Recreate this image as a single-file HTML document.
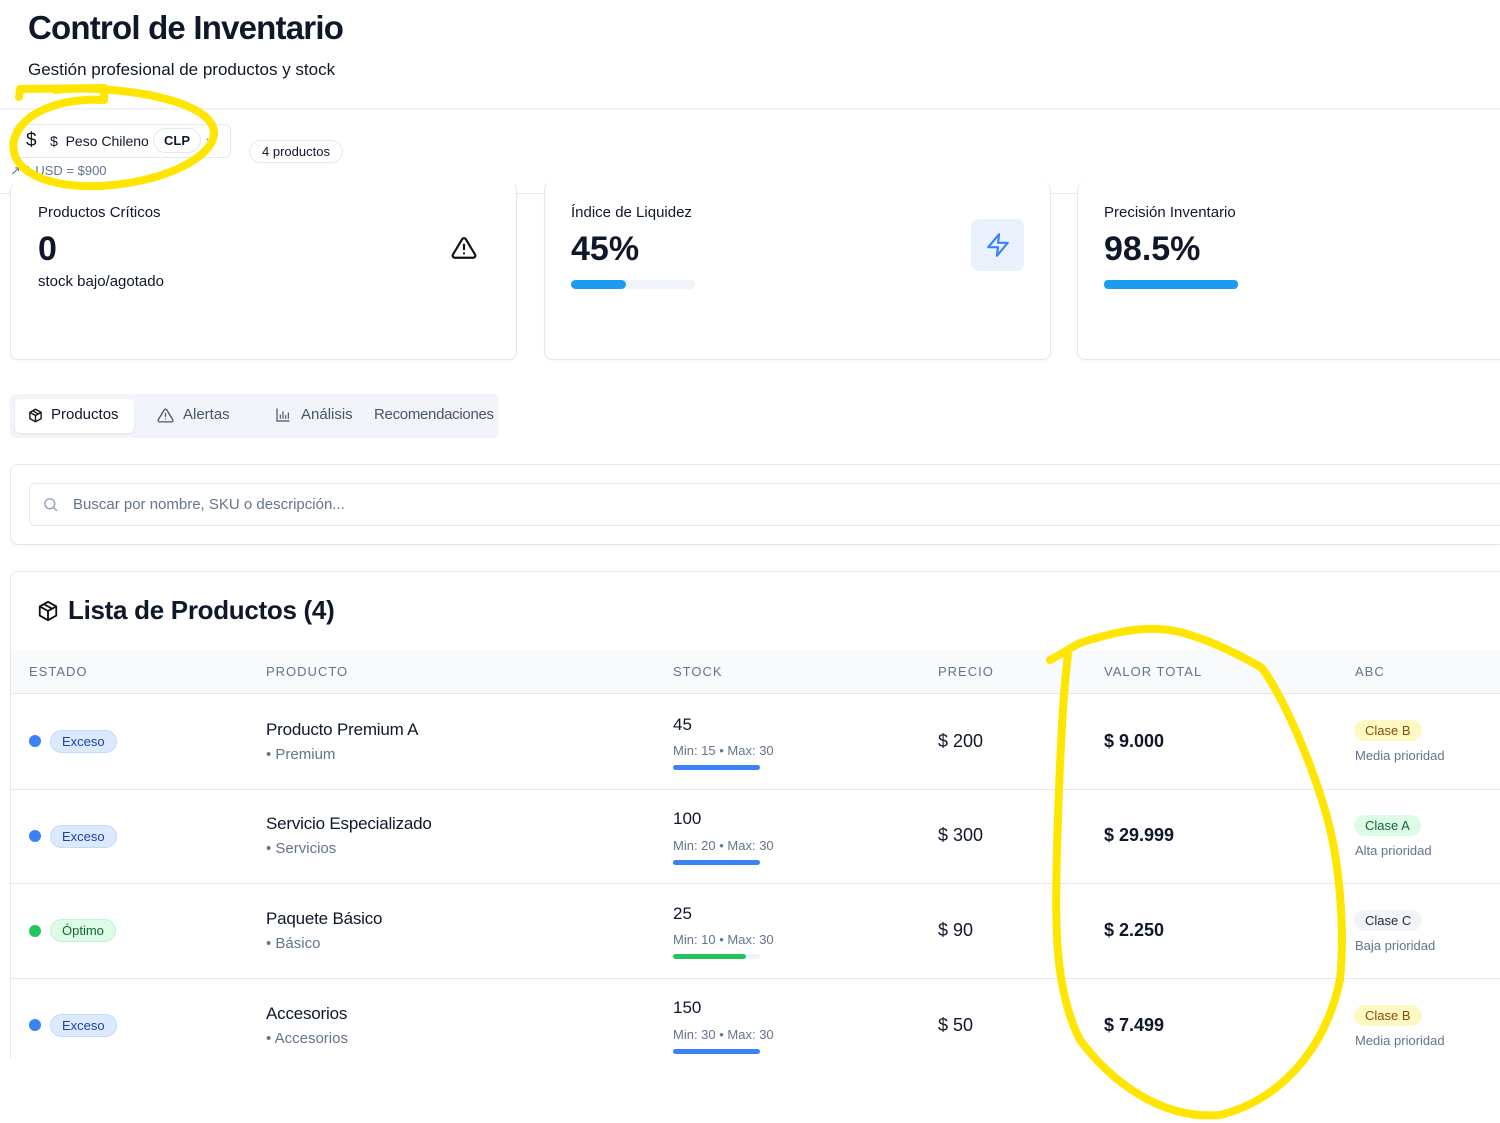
<!DOCTYPE html>
<html><head><meta charset="utf-8"><style>
*{box-sizing:border-box;margin:0;padding:0}
html,body{width:1500px;height:1123px;overflow:hidden}
body{background:#fff;font-family:"Liberation Sans",sans-serif;color:#0f172a;position:relative}
.a{position:absolute;white-space:nowrap}
.card{position:absolute;border:1px solid #e2e8f0;border-radius:8px;background:#fff;box-shadow:0 1px 2px rgba(0,0,0,.04)}
.th{position:absolute;top:664px;font-size:13px;letter-spacing:1px;color:#64748b}
.badge{position:absolute;font-size:13px;border-radius:12px;padding:3px 11px}
.ex{background:#dbeafe;color:#1e40af;border:1px solid #bfdbfe}
.op{background:#dcfce7;color:#166534;border:1px solid #bbf7d0}
.dot{position:absolute;width:12px;height:12px;border-radius:50%}
.bar{position:absolute;height:5px;border-radius:3px;background:#f1f5f9;width:87px}
.bar i{display:block;height:5px;border-radius:3px;background:#3b82f6}
.row{position:absolute;left:10px;width:1490px;border-top:1px solid #e5e7eb}
.nm{font-size:17px;letter-spacing:-.2px}
</style></head><body>
<div class="a" style="left:28px;top:9px;font-size:33px;font-weight:bold;letter-spacing:-.8px">Control de Inventario</div>
<div class="a" style="left:28px;top:60px;font-size:17px">Gestión profesional de productos y stock</div>
<div class="a" style="left:0;top:108px;width:1500px;border-top:2px solid #f1f5f9"></div>
<div class="a" style="left:13px;top:124px;width:218px;height:34px;border:1px solid #e2e8f0;border-radius:6px"></div>
<div class="a" style="left:26px;top:130px;font-size:19px">$</div>
<div class="a" style="left:50px;top:133px;font-size:14px">$&nbsp;&nbsp;Peso Chileno</div>
<div class="a" style="left:153px;top:128px;width:48px;height:25px;border:1px solid #e2e8f0;border-radius:13px;font-size:13px;font-weight:bold;text-align:center;line-height:23px">CLP</div>
<div class="a" style="left:204px;top:131px;font-size:11px;color:#64748b">⌄</div>
<div class="a" style="left:10px;top:163px;font-size:13px;color:#64748b">↗ 1 USD = $900</div>
<div class="a" style="left:249px;top:140px;width:94px;height:23px;border:1px solid #e2e8f0;border-radius:12px;font-size:13px;text-align:center;line-height:21px">4 productos</div>
<div class="a" style="left:0;top:193px;width:1500px;border-top:1px solid #e5e7eb"></div>

<div class="card" style="left:10px;top:182px;width:507px;height:178px;border-top:none"></div>
<div class="card" style="left:544px;top:182px;width:507px;height:178px;border-top:none"></div>
<div class="card" style="left:1077px;top:182px;width:423px;height:178px;border-top:none;border-right:none;border-radius:8px 0 0 8px"></div>
<div class="a" style="left:38px;top:204px;font-size:15px">Productos Críticos</div>
<div class="a" style="left:38px;top:230px;font-size:34px;font-weight:bold">0</div>
<div class="a" style="left:38px;top:273px;font-size:15px">stock bajo/agotado</div>
<svg class="a" style="left:451px;top:235px" width="26" height="26" viewBox="0 0 24 24" fill="none" stroke="#111" stroke-width="2" stroke-linecap="round" stroke-linejoin="round"><path d="M10.3 3.9 1.8 18a2 2 0 0 0 1.7 3h17a2 2 0 0 0 1.7-3L13.7 3.9a2 2 0 0 0-3.4 0z"/><path d="M12 9v4M12 17h.01"/></svg>
<div class="a" style="left:571px;top:204px;font-size:15px">Índice de Liquidez</div>
<div class="a" style="left:571px;top:230px;font-size:34px;font-weight:bold">45%</div>
<div class="a" style="left:571px;top:280px;width:124px;height:9px;border-radius:5px;background:#f1f5f9"><div style="width:55px;height:9px;border-radius:5px;background:#1d9bf0"></div></div>
<div class="a" style="left:971px;top:219px;width:53px;height:52px;border-radius:8px;background:#eaf1fd"></div>
<svg class="a" style="left:985px;top:232px" width="26" height="26" viewBox="0 0 24 24" fill="none" stroke="#3b82f6" stroke-width="2" stroke-linejoin="round"><path d="M13 2 3 14h9l-1 8 10-12h-9l1-8z"/></svg>
<div class="a" style="left:1104px;top:204px;font-size:15px">Precisión Inventario</div>
<div class="a" style="left:1104px;top:230px;font-size:34px;font-weight:bold">98.5%</div>
<div class="a" style="left:1104px;top:280px;width:134px;height:9px;border-radius:4px;background:#1d9bf0"></div>

<div class="a" style="left:10px;top:394px;width:489px;height:44px;border-radius:6px;background:#f1f5f9"></div>
<div class="a" style="left:15px;top:399px;width:119px;height:34px;border-radius:5px;background:#fff;box-shadow:0 1px 2px rgba(0,0,0,.08)"></div>
<svg class="a" style="left:28px;top:408px" width="15" height="15" viewBox="0 0 24 24" fill="none" stroke="#111" stroke-width="2.2" stroke-linejoin="round"><path d="M12 2 3 7v10l9 5 9-5V7z"/><path d="M3 7l9 5 9-5M12 12v10M7.5 4.5l9 5"/></svg>
<div class="a" style="left:51px;top:406px;font-size:15px">Productos</div>
<svg class="a" style="left:157px;top:407px" width="17" height="17" viewBox="0 0 24 24" fill="none" stroke="#475569" stroke-width="1.8" stroke-linecap="round" stroke-linejoin="round"><path d="M10.3 3.9 1.8 18a2 2 0 0 0 1.7 3h17a2 2 0 0 0 1.7-3L13.7 3.9a2 2 0 0 0-3.4 0z"/><path d="M12 9v4M12 17h.01"/></svg>
<div class="a" style="left:183px;top:406px;font-size:15px;color:#475569">Alertas</div>
<svg class="a" style="left:275px;top:407px" width="16" height="16" viewBox="0 0 24 24" fill="none" stroke="#475569" stroke-width="1.8" stroke-linecap="round"><path d="M3 3v18h18M8 17v-5M12 17V7M16 17v-4M20 17v-8"/></svg>
<div class="a" style="left:301px;top:406px;font-size:15px;color:#475569">Análisis</div>
<div class="a" style="left:374px;top:406px;font-size:15px;color:#475569;letter-spacing:-.3px">Recomendaciones</div>

<div class="card" style="left:10px;top:464px;width:1490px;height:81px;border-right:none;border-radius:8px 0 0 8px"></div>
<div class="a" style="left:29px;top:483px;width:1471px;height:43px;border:1px solid #e2e8f0;border-right:none;border-radius:6px 0 0 6px"></div>
<svg class="a" style="left:42px;top:496px" width="17" height="17" viewBox="0 0 24 24" fill="none" stroke="#94a3b8" stroke-width="2"><circle cx="11" cy="11" r="7"/><path d="m21 21-4.5-4.5"/></svg>
<div class="a" style="left:73px;top:496px;font-size:15px;color:#64748b">Buscar por nombre, SKU o descripción...</div>

<div class="a" style="left:10px;top:571px;width:1490px;height:487px;border:1px solid #e2e8f0;border-right:none;border-bottom:none;border-radius:8px 0 0 0;background:#fff"></div>
<svg class="a" style="left:37px;top:600px" width="22" height="22" viewBox="0 0 24 24" fill="none" stroke="#111" stroke-width="2" stroke-linejoin="round"><path d="M12 2 3 7v10l9 5 9-5V7z"/><path d="M3 7l9 5 9-5M12 12v10M7.5 4.5l9 5"/></svg>
<div class="a" style="left:68px;top:595px;font-size:26px;font-weight:bold;letter-spacing:-.3px">Lista de Productos (4)</div>
<div class="a" style="left:11px;top:650px;width:1489px;height:44px;background:#f8fafc;border-bottom:1px solid #e5e7eb"></div>
<div class="th" style="left:29px">ESTADO</div><div class="th" style="left:266px">PRODUCTO</div><div class="th" style="left:673px">STOCK</div><div class="th" style="left:938px">PRECIO</div><div class="th" style="left:1104px">VALOR TOTAL</div><div class="th" style="left:1355px">ABC</div>
<div class="row" style="top:789px"></div><div class="row" style="top:883px"></div><div class="row" style="top:978px"></div>

<div class="dot" style="left:29px;top:735px;background:#3b82f6"></div><div class="badge ex" style="left:50px;top:730px">Exceso</div>
<div class="a nm" style="left:266px;top:720px">Producto Premium A</div><div class="a" style="left:266px;top:746px;font-size:15px;color:#64748b">• Premium</div>
<div class="a" style="left:673px;top:715px;font-size:17px">45</div><div class="a" style="left:673px;top:743px;font-size:13px;color:#64748b">Min: 15 • Max: 30</div><div class="bar" style="left:673px;top:765px"><i style="width:87px"></i></div>
<div class="a" style="left:938px;top:731px;font-size:18px">$ 200</div><div class="a" style="left:1104px;top:731px;font-size:18px;font-weight:bold">$ 9.000</div>
<div class="badge" style="left:1354px;top:720px;background:#fef9c3;color:#854d0e">Clase B</div><div class="a" style="left:1355px;top:748px;font-size:13px;color:#64748b">Media prioridad</div>

<div class="dot" style="left:29px;top:830px;background:#3b82f6"></div><div class="badge ex" style="left:50px;top:825px">Exceso</div>
<div class="a nm" style="left:266px;top:814px">Servicio Especializado</div><div class="a" style="left:266px;top:840px;font-size:15px;color:#64748b">• Servicios</div>
<div class="a" style="left:673px;top:809px;font-size:17px">100</div><div class="a" style="left:673px;top:838px;font-size:13px;color:#64748b">Min: 20 • Max: 30</div><div class="bar" style="left:673px;top:860px"><i style="width:87px"></i></div>
<div class="a" style="left:938px;top:825px;font-size:18px">$ 300</div><div class="a" style="left:1104px;top:825px;font-size:18px;font-weight:bold">$ 29.999</div>
<div class="badge" style="left:1354px;top:815px;background:#dcfce7;color:#166534">Clase A</div><div class="a" style="left:1355px;top:843px;font-size:13px;color:#64748b">Alta prioridad</div>

<div class="dot" style="left:29px;top:925px;background:#22c55e"></div><div class="badge op" style="left:50px;top:919px">Óptimo</div>
<div class="a nm" style="left:266px;top:909px">Paquete Básico</div><div class="a" style="left:266px;top:935px;font-size:15px;color:#64748b">• Básico</div>
<div class="a" style="left:673px;top:904px;font-size:17px">25</div><div class="a" style="left:673px;top:932px;font-size:13px;color:#64748b">Min: 10 • Max: 30</div><div class="bar" style="left:673px;top:954px"><i style="width:73px;background:#22c55e"></i></div>
<div class="a" style="left:938px;top:920px;font-size:18px">$ 90</div><div class="a" style="left:1104px;top:920px;font-size:18px;font-weight:bold">$ 2.250</div>
<div class="badge" style="left:1354px;top:910px;background:#f1f5f9;color:#1e293b">Clase C</div><div class="a" style="left:1355px;top:938px;font-size:13px;color:#64748b">Baja prioridad</div>

<div class="dot" style="left:29px;top:1019px;background:#3b82f6"></div><div class="badge ex" style="left:50px;top:1014px">Exceso</div>
<div class="a nm" style="left:266px;top:1004px">Accesorios</div><div class="a" style="left:266px;top:1030px;font-size:15px;color:#64748b">• Accesorios</div>
<div class="a" style="left:673px;top:998px;font-size:17px">150</div><div class="a" style="left:673px;top:1027px;font-size:13px;color:#64748b">Min: 30 • Max: 30</div><div class="bar" style="left:673px;top:1049px"><i style="width:87px"></i></div>
<div class="a" style="left:938px;top:1015px;font-size:18px">$ 50</div><div class="a" style="left:1104px;top:1015px;font-size:18px;font-weight:bold">$ 7.499</div>
<div class="badge" style="left:1354px;top:1005px;background:#fef9c3;color:#854d0e">Clase B</div><div class="a" style="left:1355px;top:1033px;font-size:13px;color:#64748b">Media prioridad</div>

<svg class="a" style="left:0;top:0" width="1500" height="1123" fill="none" stroke="#ffe600" stroke-width="8" stroke-linecap="round" stroke-linejoin="round">
<path d="M19 97 L20 89 L104 88 L104 100 C60 98 22 112 14 140 C8 170 45 188 100 186 C160 183 210 160 214 135 C216 112 175 98 130 92 C100 88 72 88 55 90"/>
<path d="M1050 660 C1060 655 1070 648 1080 643 C1120 630 1150 625 1180 632 C1210 640 1240 655 1262 668 C1285 700 1310 760 1325 810 C1340 860 1345 930 1340 980 C1325 1050 1280 1100 1220 1115 C1160 1120 1110 1080 1080 1040 C1055 990 1055 930 1057 850 C1059 780 1062 700 1068 655"/>
</svg>
</body></html>
